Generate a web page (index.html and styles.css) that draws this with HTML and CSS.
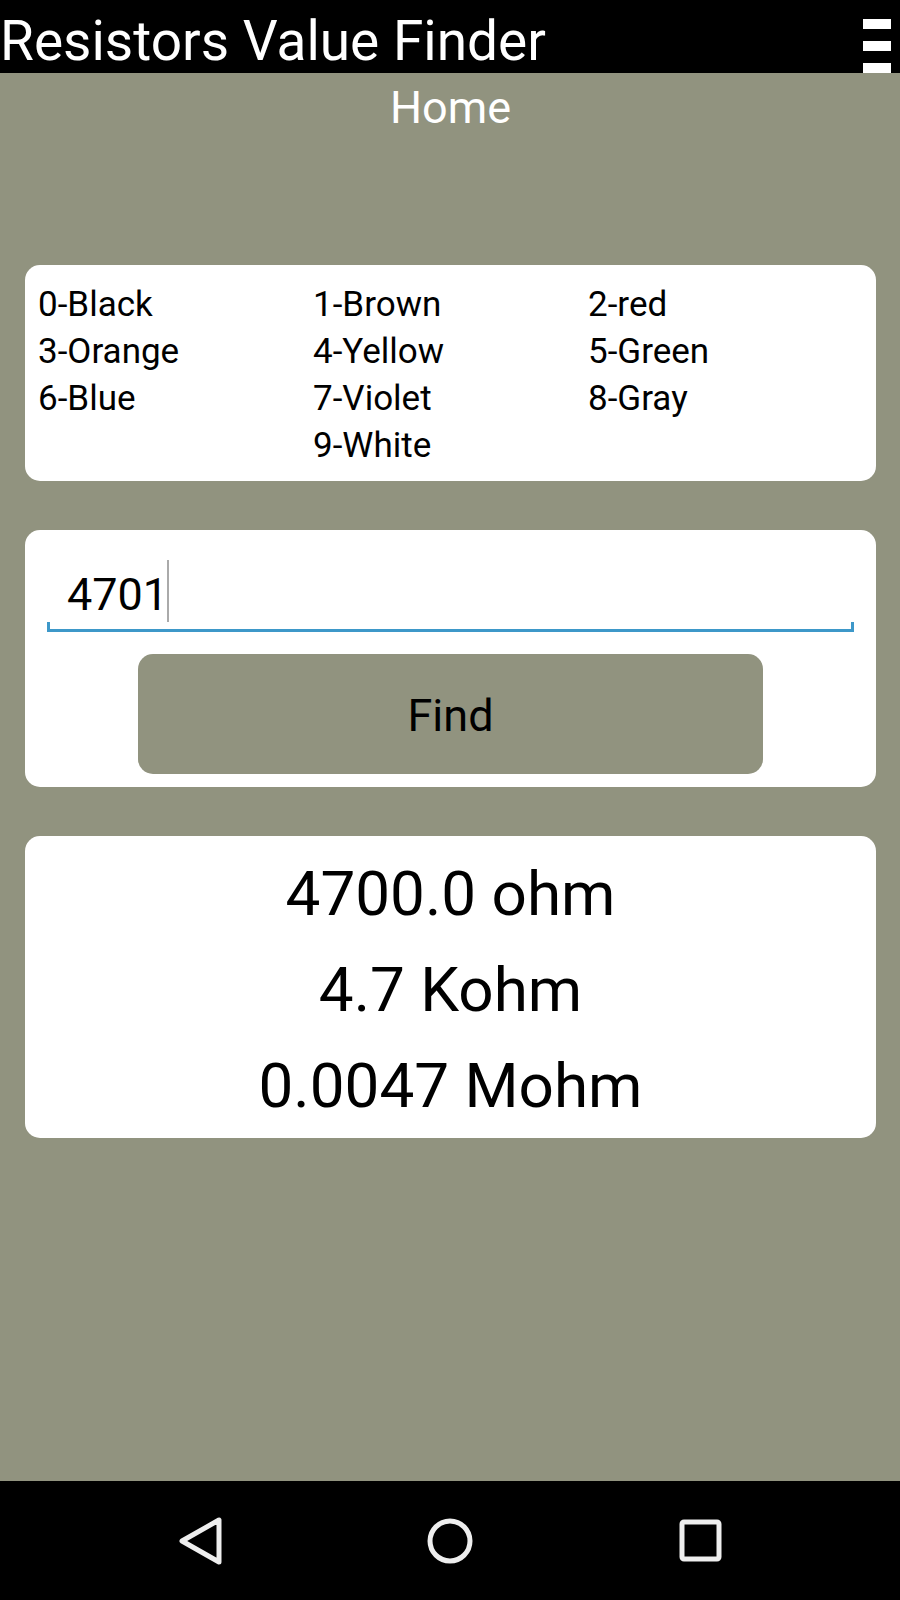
FILE: index.html
```html
<!DOCTYPE html>
<html lang="en">
<head>
    <meta charset="UTF-8">
    <meta name="viewport" content="width=device-width, initial-scale=1.0">
    <title>Resistors Value Finder</title>
    <link rel="stylesheet" href="styles.css">
</head>
<body>

    <header class="top-bar">
        <h1>Resistors Value Finder</h1>
        <button type="button" class="menu-button" aria-label="Menu">
            <span></span>
            <span></span>
            <span></span>
        </button>
    </header>

    <main>
        <h2>Home</h2>

        <ul class="card color-codes">
            <li>0-Black</li>
            <li>1-Brown</li>
            <li>2-red</li>
            <li>3-Orange</li>
            <li>4-Yellow</li>
            <li>5-Green</li>
            <li>6-Blue</li>
            <li>7-Violet</li>
            <li>8-Gray</li>
            <li class="last-code">9-White</li>
        </ul>

        <form class="card find-form">
            <div class="field">
                <input type="text" id="code" name="code" value="4701" inputmode="numeric" autocomplete="off" aria-label="Color code">
                <span class="caret"></span>
            </div>
            <button type="button" class="find-button">Find</button>
        </form>

        <div class="card result">
            <p>4700.0 ohm</p>
            <p>4.7 Kohm</p>
            <p>0.0047 Mohm</p>
        </div>
    </main>

    <nav class="nav-bar">
        <button type="button" aria-label="Back">
            <svg width="48" height="48" viewBox="0 0 48 48">
                <path d="M6 24 L43 3 V45 Z" />
            </svg>
        </button>
        <button type="button" aria-label="Home">
            <svg width="48" height="48" viewBox="0 0 48 48">
                <circle cx="24" cy="24" r="20" />
            </svg>
        </button>
        <button type="button" aria-label="Recent apps">
            <svg width="48" height="48" viewBox="0 0 48 48">
                <rect x="6" y="5" width="37" height="37" rx="2" />
            </svg>
        </button>
    </nav>

</body>
</html>
```
FILE: styles.css
```css
* {
    box-sizing: border-box;
}

body {
    font-family: Roboto, "Liberation Sans", sans-serif;
    margin: 0;
    background-color: #91937f;
    color: #000;
    display: flex;
    flex-direction: column;
    min-height: 100vh;
}

h1, h2, p, ul {
    margin: 0;
    padding: 0;
    font-weight: 400;
}

button {
    border: none;
    padding: 0;
    font-family: inherit;
    cursor: pointer;
}

.top-bar {
    background-color: #000;
    color: #fff;
    display: flex;
    justify-content: space-between;
    align-items: flex-end;
    height: 73px;
    padding-right: 9px;
}

h1 {
    font-size: 55px;
    line-height: 64px;
}

.menu-button {
    background: none;
    display: flex;
    flex-direction: column;
    gap: 12px;
}

.menu-button span {
    width: 28px;
    height: 10px;
    background-color: #fff;
}

main {
    flex: 1;
    padding: 0 24px 0 25px;
}

h2 {
    color: #fff;
    font-size: 45px;
    line-height: 70px;
    margin-bottom: 122px;
    text-align: center;
}

.card {
    background-color: #fff;
    border-radius: 15px;
    margin-bottom: 49px;
}

.color-codes {
    display: grid;
    grid-template-columns: repeat(3, 1fr);
    padding: 16px 13px 12px;
    font-size: 35px;
    line-height: 47px;
    list-style: none;
}

.last-code {
    grid-column: 2;
}

.find-form {
    padding: 26px 22px 13px;
}

.field {
    position: relative;
}

.field input {
    display: block;
    width: 100%;
    height: 76px;
    padding: 0 20px;
    border: none;
    outline: none;
    background: none;
    font-family: inherit;
    font-size: 45px;
    color: #000;
    caret-color: transparent;
}

/* underline with the small ticks at both ends */
.field::after {
    content: "";
    position: absolute;
    left: 0;
    right: 0;
    bottom: 0;
    height: 7px;
    border: 3px solid #3d98c9;
    border-top: none;
    pointer-events: none;
}

.caret {
    position: absolute;
    left: 120px;
    top: 4px;
    width: 2px;
    height: 62px;
    background-color: #aaa;
}

.find-button {
    display: block;
    width: 625px;
    max-width: 100%;
    height: 120px;
    margin: 22px auto 0;
    padding-top: 2px;
    border-radius: 15px;
    background-color: #91937f;
    color: #000;
    font-size: 45px;
}

.result {
    padding: 10px 0 4px;
    font-size: 62px;
    line-height: 96px;
    text-align: center;
}

.nav-bar {
    background-color: #000;
    display: grid;
    grid-template-columns: repeat(3, 1fr);
    height: 119px;
    padding: 0 75px;
}

.nav-bar button {
    background: none;
    display: flex;
    align-items: center;
    justify-content: center;
}

.nav-bar svg {
    fill: none;
    stroke: #eee;
    stroke-width: 5;
    stroke-linejoin: round;
}
```
